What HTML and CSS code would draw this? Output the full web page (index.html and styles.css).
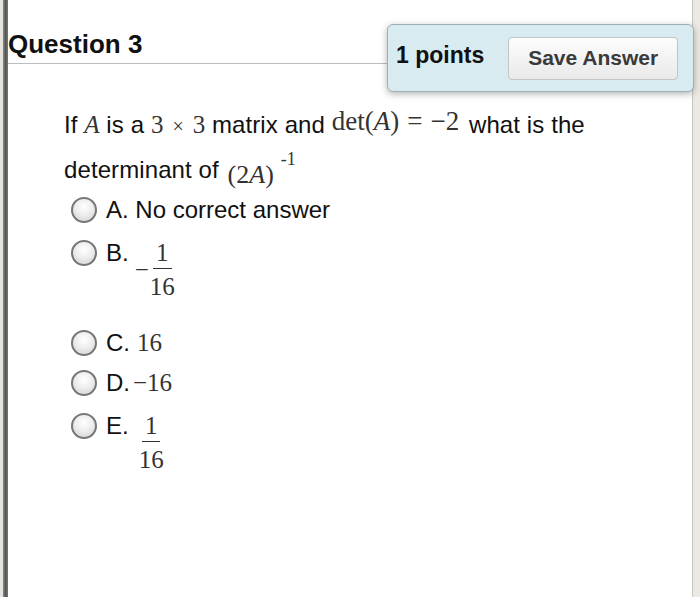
FILE: index.html
```html
<!DOCTYPE html>
<html>
<head>
<meta charset="utf-8">
<link rel="stylesheet" href="styles.css">
</head>
<body>
<div class="frame">
  <div class="edge-left"></div>
  <div class="bar-left"></div>
  <main class="main">
    <header class="head">
      <h1 class="title">Question 3</h1>
    </header>
    <div class="points-box">
      <span class="points">1 points</span>
      <button class="save">Save Answer</button>
    </div>
    <p class="question">If <span class="m mi">A</span> is a <span class="m">3</span><span class="m times">×</span><span class="m">3</span> matrix and <span class="m det">det(<span class="mi">A</span>)<span class="eq">=</span>−2</span> what is the<br>determinant of <span class="m low">(2<span class="mi">A</span>)</span><sup class="m sup">-1</sup></p>
    <ul class="options">
      <li class="opt"><span class="radio"></span><span class="lbl">A. No correct answer</span></li>
      <li class="opt"><span class="radio"></span><span class="lbl">B.</span><span class="expr"><span class="m minus">−</span><span class="frac m"><span class="num">1</span><span class="den">16</span></span></span></li>
      <li class="opt opt-c"><span class="radio"></span><span class="lbl">C.</span><span class="m val">16</span></li>
      <li class="opt opt-d"><span class="radio"></span><span class="lbl">D.</span><span class="m val val-d">−16</span></li>
      <li class="opt"><span class="radio"></span><span class="lbl">E.</span><span class="expr expr-e"><span class="frac m"><span class="num">1</span><span class="den">16</span></span></span></li>
    </ul>
  </main>
  <div class="bar-right"></div>
  <div class="edge-right"></div>
</div>
</body>
</html>
```
FILE: styles.css
```css
html, body {
  margin: 0;
  padding: 0;
  background: #ffffff;
}
body {
  font-family: "Liberation Sans", Arial, Helvetica, sans-serif;
  color: #111;
}
.frame {
  display: flex;
  height: 597px;
}
.edge-left {
  width: 3px;
  background: #e6e3de;
}
.bar-left {
  width: 5px;
  background: linear-gradient(to right, #8a8a8a, #555 50%, #777);
}
.main {
  flex: 1;
  position: relative;
  background: #fff;
}
.bar-right {
  width: 1px;
  background: #c8c6c2;
}
.edge-right {
  width: 7px;
  background: #ece9e4;
}
.head {
  padding: 29px 0 4px 0;
  border-bottom: 1px solid #bdbdbd;
}
.title {
  margin: 0;
  font-size: 26px;
  line-height: 30px;
  font-weight: bold;
  color: #111;
}
.points-box {
  position: absolute;
  top: 24px;
  right: -2px;
  width: 307px;
  height: 68px;
  box-sizing: border-box;
  display: flex;
  align-items: center;
  gap: 24px;
  padding: 0 12px 0 8px;
  background: #d7ebf1;
  border: 1px solid #9fb0b5;
  border-radius: 6px;
  box-shadow: 0 2px 7px rgba(0, 0, 0, 0.3);
}
.points {
  font-size: 23px;
  font-weight: bold;
  color: #111;
  margin-bottom: 5px;
}
.save {
  width: 170px;
  height: 43px;
  border: 1px solid #c4c4c4;
  border-radius: 4px;
  background: linear-gradient(to bottom, #fdfdfd, #e9e9e9);
  font-family: "Liberation Sans", Arial, sans-serif;
  font-size: 21px;
  font-weight: bold;
  color: #3a3a3a;
  padding: 0;
}
.question {
  margin: 39px 0 0 56px;
  font-size: 24px;
  line-height: 43px;
  color: #111;
  letter-spacing: 0.1px;
}
.m {
  font-family: "Liberation Serif", "Times New Roman", serif;
  font-size: 25px;
  color: #333;
  letter-spacing: 0;
}
.mi {
  font-style: italic;
}
.times {
  font-size: 20px;
  margin: 0 9px;
}
.det {
  position: relative;
  top: -3px;
  font-size: 27px;
  margin-right: 3px;
}
.eq {
  margin: 0 8px;
}
.low {
  font-size: 26px;
  position: relative;
  top: 5px;
  margin-left: 2px;
}
.sup {
  font-size: 18px;
  vertical-align: 0;
  position: relative;
  top: -13px;
  margin-left: 7px;
}
.options {
  list-style: none;
  margin: 1px 0 0 0;
  padding: 0 0 0 63px;
  display: flex;
  flex-direction: column;
  gap: 13px;
}
.opt {
  display: flex;
  align-items: flex-start;
  font-size: 24px;
  line-height: 30px;
}
.opt-c {
  margin-top: 13px;
}
.opt-d {
  margin-top: -3px;
}
.radio {
  width: 26px;
  height: 26px;
  box-sizing: border-box;
  margin-top: 2px;
  margin-right: 9px;
  border-radius: 50%;
  border: 2px solid #777;
  background: radial-gradient(circle at 50% 35%, #ffffff 0%, #eeeeee 45%, #cfcfcf 100%);
  flex: none;
}
.lbl {
  color: #111;
}
.expr {
  display: inline-flex;
  align-items: center;
  margin-left: 6px;
}
.expr-e {
  margin-left: 10px;
}
.minus {
  margin-top: 0;
  margin-right: 1px;
}
.frac {
  display: inline-flex;
  flex-direction: column;
  align-items: center;
}
.num {
  line-height: 30px;
  padding: 0 3px;
  border-bottom: 1.5px solid #333;
}
.den {
  line-height: 30px;
  padding-top: 3px;
}
.val {
  margin-left: 7px;
}
.val-d {
  margin-left: 3px;
}
```
